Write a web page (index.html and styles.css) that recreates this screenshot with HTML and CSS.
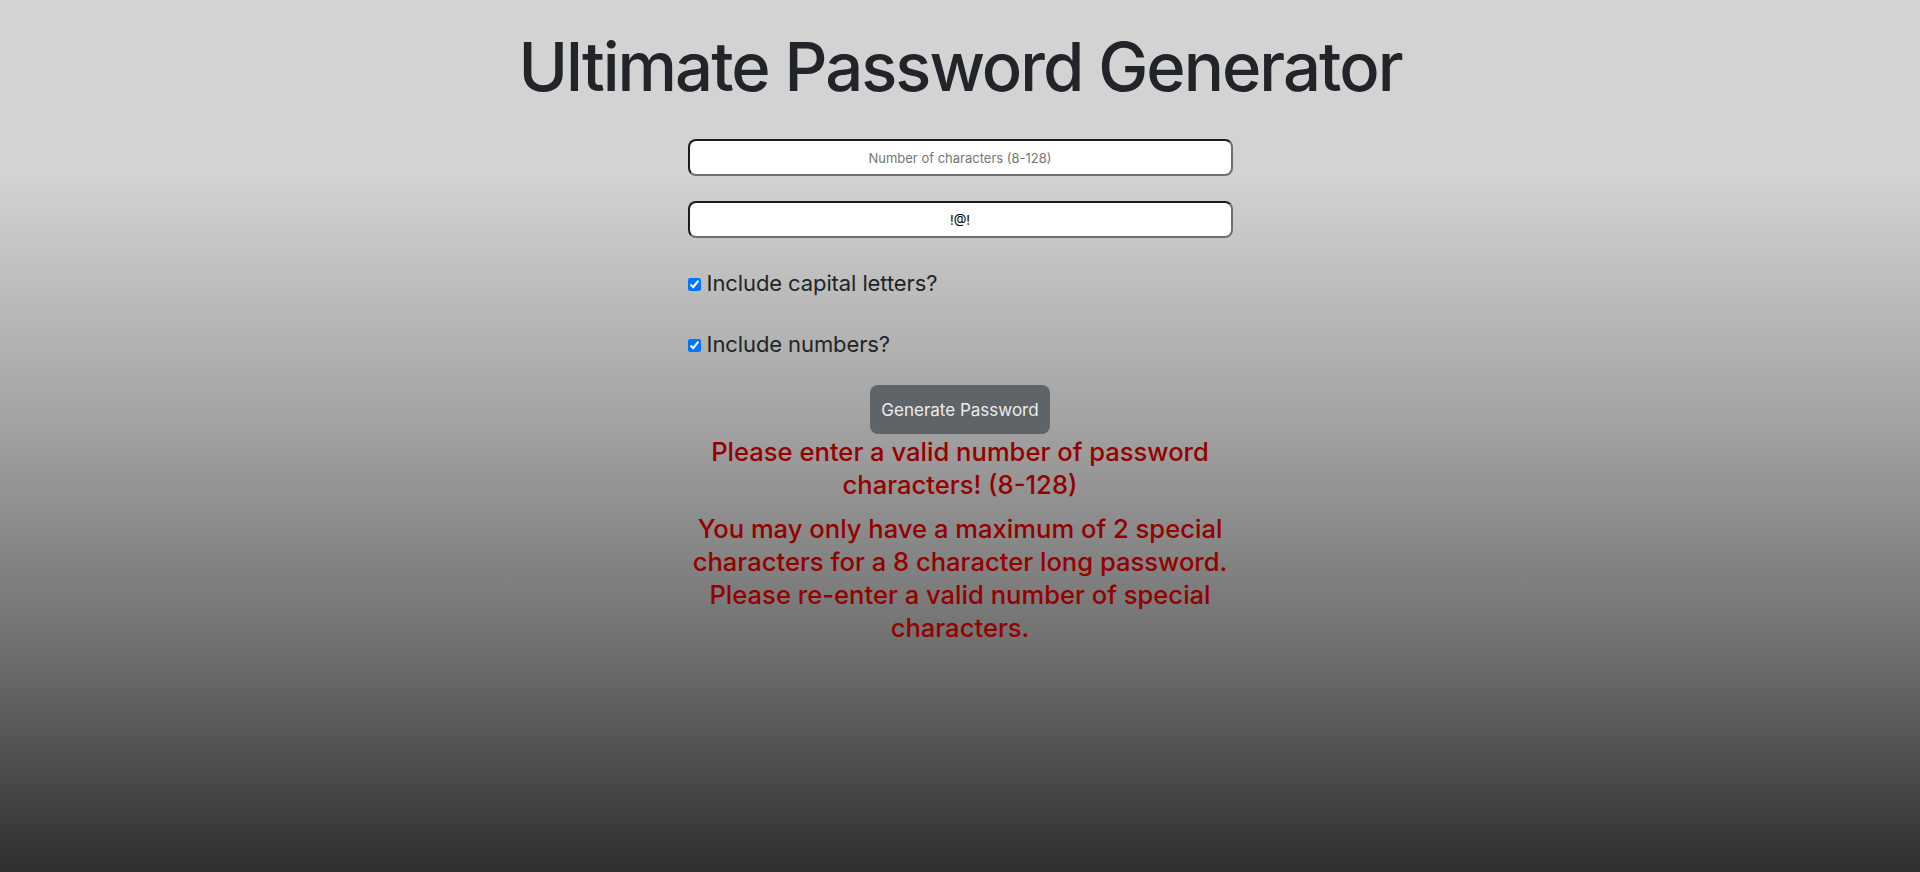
FILE: index.html
```html
<!DOCTYPE html>
<html lang="en">
<head>
<meta charset="utf-8">
<title>Ultimate Password Generator</title>
<link rel="stylesheet" href="styles.css">
</head>
<body>
<main class="page">
  <h1 class="title">Ultimate Password Generator</h1>
  <form class="generator">
    <input class="field" type="text" placeholder="Number of characters (8-128)">
    <input class="field" type="text" value="!@!">
    <label class="option"><input class="check" type="checkbox" checked> Include capital letters?</label>
    <label class="option"><input class="check" type="checkbox" checked> Include numbers?</label>
    <button class="btn" type="button">Generate Password</button>
    <div class="errors">
      <p class="error">Please enter a valid number of password characters! (8-128)</p>
      <p class="error">You may only have a maximum of 2 special characters for a 8 character long password. Please re-enter a valid number of special characters.</p>
    </div>
  </form>
</main>
</body>
</html>
```

FILE: styles.css
```css
html, body {
  margin: 0;
  height: 100%;
}

body {
  font-family: Inter, "Liberation Sans", Arial, sans-serif;
  color: #212529;
  background: linear-gradient(to bottom, #d3d3d3 0%, #d3d3d3 20%, #a0a0a0 50%, #6e6e6e 75%, #2e2e2e 100%);
}

.page {
  display: flex;
  flex-direction: column;
  align-items: center;
}

.title {
  margin: 26px 0 0;
  font-size: 67px;
  font-weight: 500;
  line-height: 82px;
  letter-spacing: -2px;
  color: #212529;
}

.generator {
  width: 545px;
  margin-top: 31px;
  display: flex;
  flex-direction: column;
  align-items: stretch;
}

.field {
  box-sizing: border-box;
  height: 37px;
  margin: 0 0 25px;
  border: 2px solid;
  border-color: #1c1c1c #6f6f6f #6f6f6f #1c1c1c;
  border-radius: 8px;
  background: #fff;
  text-align: center;
  font-family: Inter, "Liberation Sans", Arial, sans-serif;
  font-size: 13px;
  color: #000;
}

.field::placeholder {
  color: #757575;
}

.option {
  align-self: flex-start;
  font-size: 22px;
  line-height: 34px;
  letter-spacing: -0.1px;
  margin: 3px 0 24px;
}

.check {
  width: 13px;
  height: 13px;
  margin: 0;
  vertical-align: baseline;
}

.btn {
  align-self: center;
  height: 49px;
  padding: 0 11px;
  border: 0;
  border-radius: 8px;
  background: #5f6468;
  color: #ececec;
  font-family: Inter, "Liberation Sans", Arial, sans-serif;
  font-size: 17px;
}

.errors {
  text-align: center;
  color: #950000;
  font-size: 25.6px;
  font-weight: 500;
  line-height: 33px;
  margin-top: 1px;
}

.error {
  margin: 0 0 11px;
}
```
